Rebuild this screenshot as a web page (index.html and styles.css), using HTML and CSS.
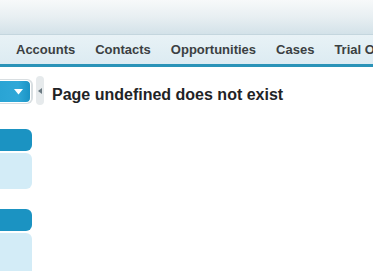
FILE: index.html
```html
<!DOCTYPE html>
<html>
<head>
<meta charset="utf-8">
<link rel="stylesheet" href="styles.css">
</head>
<body>
<div class="header"></div>
<nav class="tabs">
  <span class="tab">Accounts</span>
  <span class="tab">Contacts</span>
  <span class="tab">Opportunities</span>
  <span class="tab">Cases</span>
  <span class="tab">Trial Orgs</span>
</nav>
<div class="main">
  <aside class="sidebar">
    <div class="picker">
      <svg class="arrow" width="9" height="6" viewBox="0 0 9 6"><path d="M0 0H9L4.5 5.5Z" fill="#fff"/></svg>
    </div>
    <div class="block-head b1"></div>
    <div class="block-body b1body"></div>
    <div class="block-head b2"></div>
    <div class="block-body b2body"></div>
  </aside>
  <div class="handle">
    <svg width="4" height="6" viewBox="0 0 4 6"><path d="M4 0V6L0 3Z" fill="#6b7a82"/></svg>
  </div>
  <h1 class="title">Page undefined does not exist</h1>
</div>
</body>
</html>
```
FILE: styles.css
```css
html, body {
  margin: 0;
  padding: 0;
  background: #fff;
  font-family: "Liberation Sans", Arial, sans-serif;
  overflow: hidden;
}
.header {
  height: 34px;
  background: linear-gradient(#f7f9fa, #e8eff2 50%, #d3e2e9);
  border-bottom: 1px solid #c4d6de;
}
.tabs {
  height: 29px;
  display: flex;
  align-items: center;
  padding-left: 6px;
  background: linear-gradient(#e8f2f6, #dcebf2);
  border-bottom: 3px solid #2a93b8;
  white-space: nowrap;
  overflow: hidden;
}
.tab {
  padding: 0 10px;
  font-size: 13px;
  font-weight: bold;
  color: #3b3f42;
  line-height: 29px;
}
.main {
  display: flex;
  align-items: flex-start;
}
.sidebar {
  width: 32px;
  flex: none;
  padding-top: 13px;
}
.picker {
  width: 30px;
  height: 21px;
  background: linear-gradient(90deg, #2aa4d4, #2fa8d8 60%, #1a93c4);
  border: 1px solid #fff;
  border-left: none;
  border-radius: 0 5px 5px 0;
  box-shadow: 1px 0 0 1px #d8dee1;
  display: flex;
  align-items: center;
  justify-content: flex-end;
}
.arrow {
  margin-right: 7px;
}
.block-head {
  width: 32px;
  height: 22px;
  background: #1b93c2;
  border-radius: 0 6px 6px 0;
}
.b1 { margin-top: 26px; }
.b2 { margin-top: 20px; }
.block-body {
  width: 32px;
  background: #d3ecf7;
  border-radius: 0 6px 6px 0;
  margin-top: 2px;
}
.b1body { height: 36px; }
.b2body { height: 38px; border-radius: 0 6px 0 0; }
.handle {
  flex: none;
  width: 8px;
  height: 29px;
  margin-top: 9px;
  margin-left: 4px;
  background: #e6eaec;
  border-radius: 4px;
  display: flex;
  align-items: center;
  justify-content: center;
}
.title {
  margin: 18px 0 0 8px;
  font-size: 16px;
  font-weight: bold;
  color: #1f2326;
  line-height: 19px;
}
```
